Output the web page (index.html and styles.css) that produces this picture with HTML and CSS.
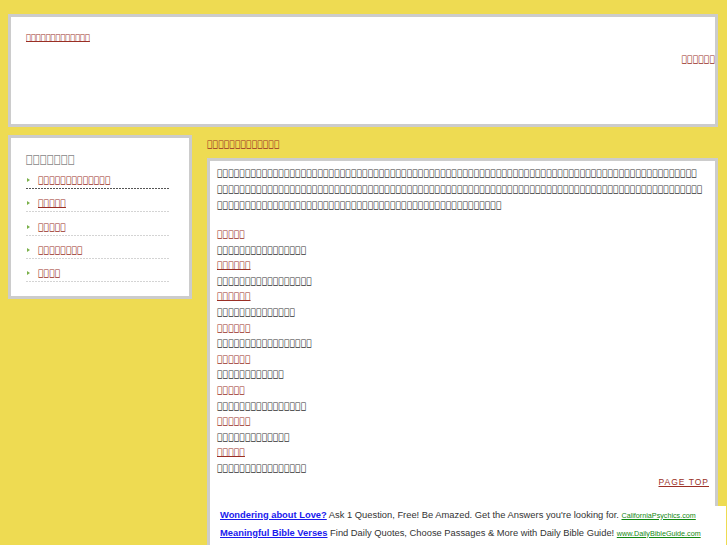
FILE: index.html
```html
<!DOCTYPE html>
<html lang="ja">
<head>
<meta charset="utf-8">
<title>&#xE000;&#xE000;&#xE000;&#xE000;&#xE000;&#xE000;</title>
<link rel="stylesheet" href="styles.css">
</head>
<body>
<div class="page">
  <header class="header">
    <a class="site-title" href="#">&#xE000;&#xE000;&#xE000;&#xE000;&#xE000;&#xE000;&#xE000;&#xE000;&#xE000;&#xE000;&#xE000;&#xE000;&#xE000;</a>
    <div class="header-nav"><a href="#">&#xE000;&#xE000;&#xE000;&#xE000;&#xE000;&#xE000;</a></div>
  </header>
  <div class="columns">
    <aside class="sidebar">
      <h2 class="side-title">&#xE000;&#xE000;&#xE000;&#xE000;&#xE000;&#xE000;&#xE000;</h2>
      <ul class="side-menu">
        <li class="current"><a href="#">&#xE000;&#xE000;&#xE000;&#xE000;&#xE000;&#xE000;&#xE000;&#xE000;&#xE000;&#xE000;&#xE000;&#xE000;&#xE000;</a></li>
        <li><a href="#">&#xE000;&#xE000;&#xE000;&#xE000;&#xE000;</a></li>
        <li><a href="#">&#xE000;&#xE000;&#xE000;&#xE000;&#xE000;</a></li>
        <li><a href="#">&#xE000;&#xE000;&#xE000;&#xE000;&#xE000;&#xE000;&#xE000;&#xE000;</a></li>
        <li><a href="#">&#xE000;&#xE000;&#xE000;&#xE000;</a></li>
      </ul>
    </aside>
    <main class="main">
      <h1 class="main-title"><a href="#">&#xE000;&#xE000;&#xE000;&#xE000;&#xE000;&#xE000;&#xE000;&#xE000;&#xE000;&#xE000;&#xE000;&#xE000;&#xE000;</a></h1>
      <div class="content">
        <p class="intro">&#xE000;&#xE000;&#xE000;&#xE000;&#xE000;&#xE000;&#xE000;&#xE000;&#xE000;&#xE000;&#xE000;&#xE000;&#xE000;&#xE000;&#xE000;&#xE000;&#xE000;&#xE000;&#xE000;&#xE000;&#xE000;&#xE000;&#xE000;&#xE000;&#xE000;&#xE000;&#xE000;&#xE000;&#xE000;&#xE000;&#xE000;&#xE000;&#xE000;&#xE000;&#xE000;&#xE000;&#xE000;&#xE000;&#xE000;&#xE000;&#xE000;&#xE000;&#xE000;&#xE000;&#xE000;&#xE000;&#xE000;&#xE000;&#xE000;&#xE000;&#xE000;&#xE000;&#xE000;&#xE000;&#xE000;&#xE000;&#xE000;&#xE000;&#xE000;&#xE000;&#xE000;&#xE000;&#xE000;&#xE000;&#xE000;&#xE000;&#xE000;&#xE000;&#xE000;&#xE000;&#xE000;&#xE000;&#xE000;&#xE000;&#xE000;&#xE000;&#xE000;&#xE000;&#xE000;&#xE000;&#xE000;&#xE000;&#xE000;&#xE000;&#xE000;&#xE000;<wbr>&#xE000;&#xE000;&#xE000;&#xE000;&#xE000;&#xE000;&#xE000;&#xE000;&#xE000;&#xE000;&#xE000;&#xE000;&#xE000;&#xE000;&#xE000;&#xE000;&#xE000;&#xE000;&#xE000;&#xE000;&#xE000;&#xE000;&#xE000;&#xE000;&#xE000;&#xE000;&#xE000;&#xE000;&#xE000;&#xE000;&#xE000;&#xE000;&#xE000;&#xE000;&#xE000;&#xE000;&#xE000;&#xE000;&#xE000;&#xE000;&#xE000;&#xE000;&#xE000;&#xE000;&#xE000;&#xE000;&#xE000;&#xE000;&#xE000;&#xE000;&#xE000;&#xE000;&#xE000;&#xE000;&#xE000;&#xE000;&#xE000;&#xE000;&#xE000;&#xE000;&#xE000;&#xE000;&#xE000;&#xE000;&#xE000;&#xE000;&#xE000;&#xE000;&#xE000;&#xE000;&#xE000;&#xE000;&#xE000;&#xE000;&#xE000;&#xE000;&#xE000;&#xE000;&#xE000;&#xE000;&#xE000;&#xE000;&#xE000;&#xE000;&#xE000;&#xE000;&#xE000;<wbr>&#xE000;&#xE000;&#xE000;&#xE000;&#xE000;&#xE000;&#xE000;&#xE000;&#xE000;&#xE000;&#xE000;&#xE000;&#xE000;&#xE000;&#xE000;&#xE000;&#xE000;&#xE000;&#xE000;&#xE000;&#xE000;&#xE000;&#xE000;&#xE000;&#xE000;&#xE000;&#xE000;&#xE000;&#xE000;&#xE000;&#xE000;&#xE000;&#xE000;&#xE000;&#xE000;&#xE000;&#xE000;&#xE000;&#xE000;&#xE000;&#xE000;&#xE000;&#xE000;&#xE000;&#xE000;&#xE000;&#xE000;&#xE000;&#xE000;&#xE000;&#xE000;</p>
        <dl class="entries">
          <dt><a href="#">&#xE000;&#xE000;&#xE000;&#xE000;&#xE000;</a></dt>
          <dd>&#xE000;&#xE000;&#xE000;&#xE000;&#xE000;&#xE000;&#xE000;&#xE000;&#xE000;&#xE000;&#xE000;&#xE000;&#xE000;&#xE000;&#xE000;&#xE000;</dd>
          <dt><a href="#">&#xE000;&#xE000;&#xE000;&#xE000;&#xE000;&#xE000;</a></dt>
          <dd>&#xE000;&#xE000;&#xE000;&#xE000;&#xE000;&#xE000;&#xE000;&#xE000;&#xE000;&#xE000;&#xE000;&#xE000;&#xE000;&#xE000;&#xE000;&#xE000;&#xE000;</dd>
          <dt><a href="#">&#xE000;&#xE000;&#xE000;&#xE000;&#xE000;&#xE000;</a></dt>
          <dd>&#xE000;&#xE000;&#xE000;&#xE000;&#xE000;&#xE000;&#xE000;&#xE000;&#xE000;&#xE000;&#xE000;&#xE000;&#xE000;&#xE000;</dd>
          <dt><a href="#">&#xE000;&#xE000;&#xE000;&#xE000;&#xE000;&#xE000;</a></dt>
          <dd>&#xE000;&#xE000;&#xE000;&#xE000;&#xE000;&#xE000;&#xE000;&#xE000;&#xE000;&#xE000;&#xE000;&#xE000;&#xE000;&#xE000;&#xE000;&#xE000;&#xE000;</dd>
          <dt><a href="#">&#xE000;&#xE000;&#xE000;&#xE000;&#xE000;&#xE000;</a></dt>
          <dd>&#xE000;&#xE000;&#xE000;&#xE000;&#xE000;&#xE000;&#xE000;&#xE000;&#xE000;&#xE000;&#xE000;&#xE000;</dd>
          <dt><a href="#">&#xE000;&#xE000;&#xE000;&#xE000;&#xE000;</a></dt>
          <dd>&#xE000;&#xE000;&#xE000;&#xE000;&#xE000;&#xE000;&#xE000;&#xE000;&#xE000;&#xE000;&#xE000;&#xE000;&#xE000;&#xE000;&#xE000;&#xE000;</dd>
          <dt><a href="#">&#xE000;&#xE000;&#xE000;&#xE000;&#xE000;&#xE000;</a></dt>
          <dd>&#xE000;&#xE000;&#xE000;&#xE000;&#xE000;&#xE000;&#xE000;&#xE000;&#xE000;&#xE000;&#xE000;&#xE000;&#xE000;</dd>
          <dt><a href="#">&#xE000;&#xE000;&#xE000;&#xE000;&#xE000;</a></dt>
          <dd>&#xE000;&#xE000;&#xE000;&#xE000;&#xE000;&#xE000;&#xE000;&#xE000;&#xE000;&#xE000;&#xE000;&#xE000;&#xE000;&#xE000;&#xE000;&#xE000;</dd>
        </dl>
        <div class="pagetop"><a href="#">PAGE TOP</a></div>
        <div class="ads">
          <p class="ad"><a class="ad-title" href="#">Wondering about Love?</a> Ask 1 Question, Free! Be Amazed. Get the Answers you're looking for. <a class="ad-url" href="#">CaliforniaPsychics.com</a></p>
          <p class="ad"><a class="ad-title" href="#">Meaningful Bible Verses</a> Find Daily Quotes, Choose Passages &amp; More with Daily Bible Guide! <a class="ad-url" href="#">www.DailyBibleGuide.com</a></p>
          <p class="ad"><a class="ad-title" href="#">Coach Daily On Sale</a> Free Ship &amp; Free Shipping TODAY ! 9.99 $10.99 $1 $27.99 $9 $39.99</p>
        </div>
      </div>
    </main>
  </div>
</div>
</body>
</html>
```

FILE: styles.css
```css
html {
  overflow: hidden;
}
body {
  margin: 0;
  background: #eedb52;
  font-family: "DejaVu Sans", sans-serif;
  font-size: 9.3px;
  color: #333;
}
a {
  color: #9a2f25;
}
.page {
  width: 710px;
  margin-left: 8px;
  padding-top: 14px;
}
.header {
  box-sizing: border-box;
  height: 113px;
  background: #fff;
  border: 3px solid #ccc;
  padding: 13px 0 0 15px;
}
.site-title {
  font-size: 8.2px;
  line-height: 14px;
}
.header-nav {
  text-align: right;
  margin-top: 8px;
  line-height: 14px;
}
.columns {
  display: flex;
  align-items: flex-start;
  gap: 15px;
  margin-top: 8px;
}
.sidebar {
  box-sizing: border-box;
  width: 184px;
  flex: none;
  background: #fff;
  border: 3px solid #ccc;
  padding: 12px 19px 14px 15px;
}
.side-title {
  margin: 0 0 4px;
  font-size: 11.7px;
  font-weight: normal;
  line-height: 18px;
  color: #888;
}
.side-menu {
  list-style: none;
  margin: 0;
  padding: 0;
}
.side-menu li {
  display: flex;
  align-items: center;
  gap: 8px;
  line-height: 16px;
  padding-bottom: 1px;
  margin-bottom: 6.25px;
  background: repeating-linear-gradient(90deg, #d4d4d4 0 2px, transparent 2px 3px) left bottom / 100% 1px no-repeat;
}
.side-menu li:last-child {
  margin-bottom: 0;
}
.side-menu li.current {
  background-image: repeating-linear-gradient(90deg, #555 0 2px, transparent 2px 3px);
}
.side-menu li::before {
  content: "";
  width: 0;
  height: 0;
  border-left: 3px solid #7bb04a;
  border-top: 2px solid transparent;
  border-bottom: 2px solid transparent;
  margin-left: 1px;
}
.main {
  flex: 1;
  min-width: 0;
}
.main-title {
  margin: 0;
  font-size: 9.3px;
  font-weight: normal;
  line-height: 16px;
  padding: 1px 0 6px;
}
.content {
  background: #fff;
  border: 3px solid #ccc;
  border-bottom: none;
  padding: 4px 6px 0 7px;
}
.intro {
  margin: 0 0 13px;
  line-height: 16px;
  overflow-wrap: anywhere;
}
.entries {
  margin: 0;
  line-height: 15.6px;
}
.entries dd {
  margin: 0;
}
.pagetop {
  text-align: right;
  font-family: "Liberation Sans", sans-serif;
  font-size: 8.5px;
  letter-spacing: 1px;
  line-height: 14px;
  margin-top: -1px;
}
.ads {
  width: 516px;
  margin: 17px 0 0 -7px;
  background: #fff;
  padding: 0 0 0 10px;
  box-sizing: border-box;
  font-family: "Liberation Sans", sans-serif;
  font-size: 9.35px;
  color: #333;
}
.ad {
  margin: 0;
  line-height: 18px;
  white-space: nowrap;
}
.ad-title {
  color: #1a1aee;
  font-weight: bold;
}
.ad-url {
  color: #118811;
  font-size: 7.2px;
  line-height: 1;
}
```
